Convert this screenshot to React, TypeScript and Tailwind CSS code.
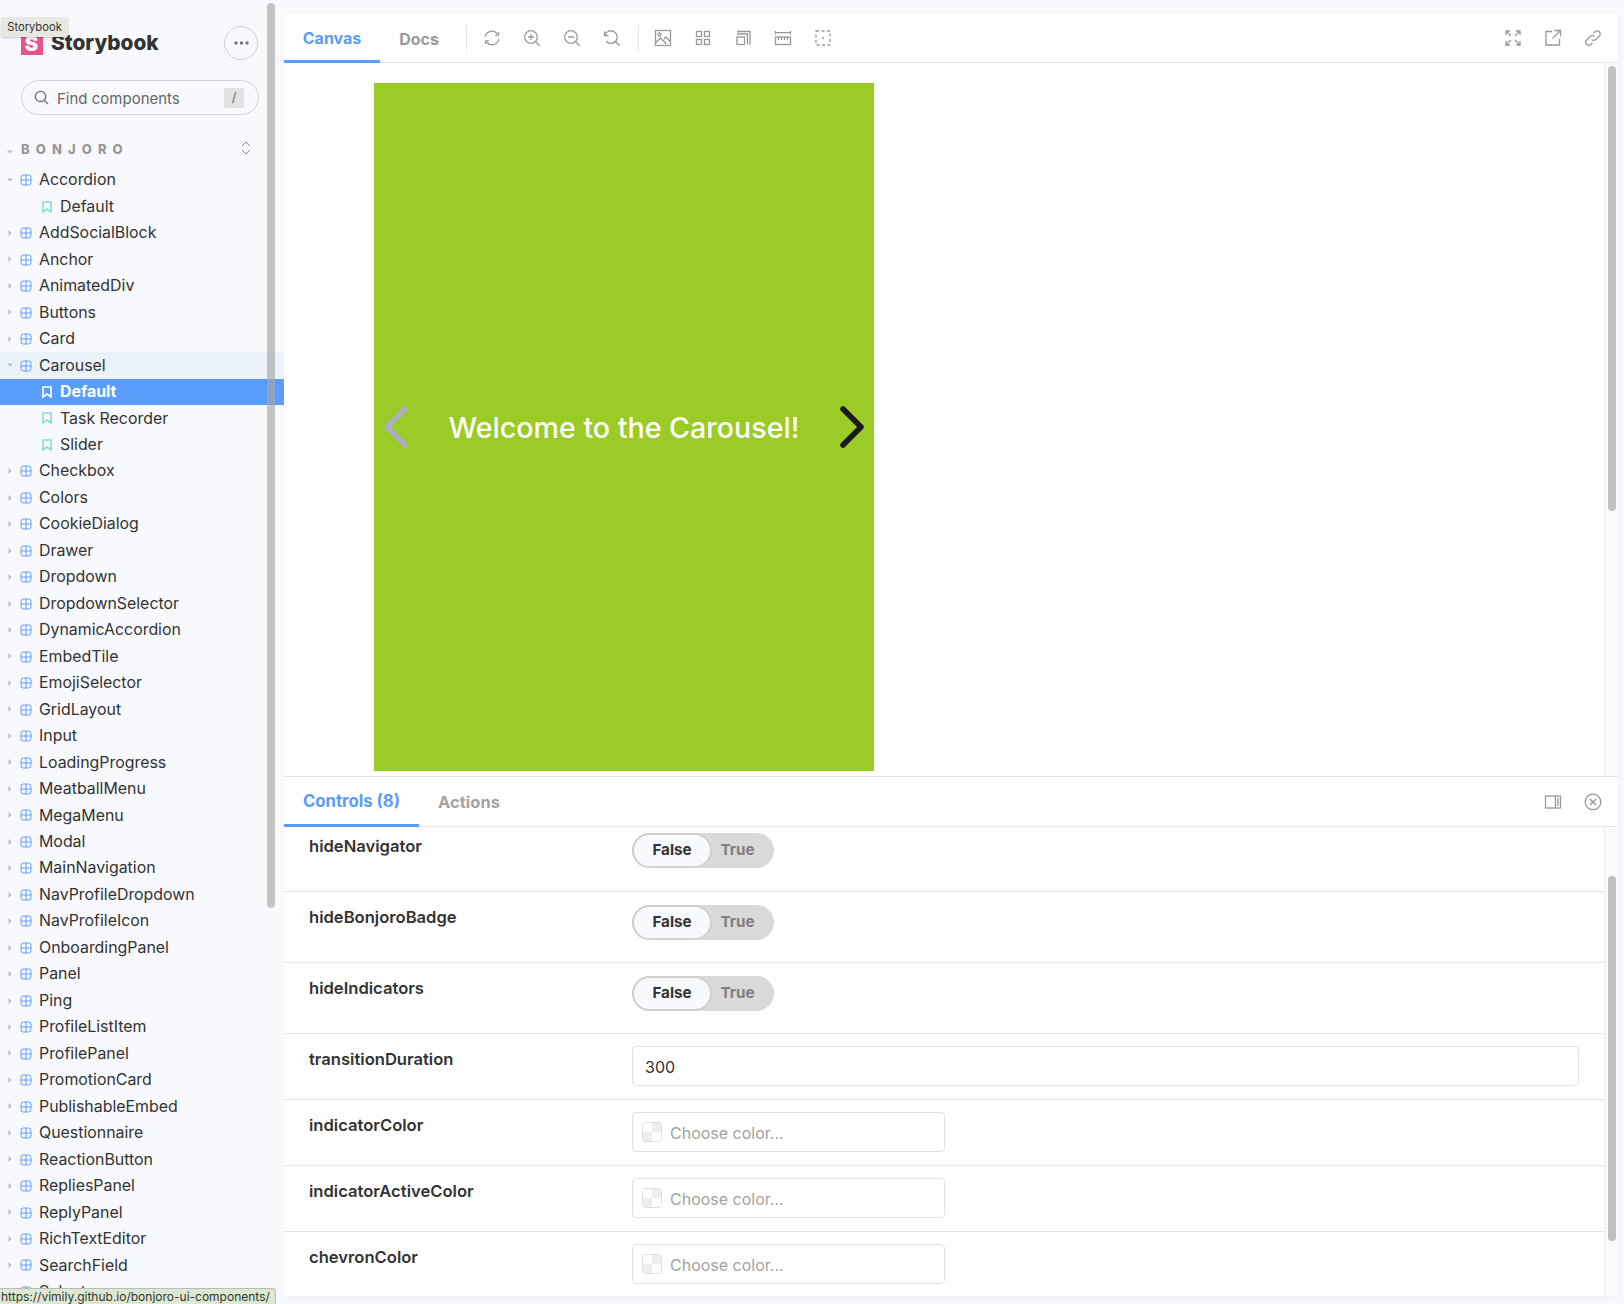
import type { ReactNode } from 'react'

const tree: { name: string; open?: boolean; stories?: string[] }[] = [
  { name: 'Accordion', open: true, stories: ['Default'] },
  { name: 'AddSocialBlock' },
  { name: 'Anchor' },
  { name: 'AnimatedDiv' },
  { name: 'Buttons' },
  { name: 'Card' },
  { name: 'Carousel', open: true, stories: ['Default', 'Task Recorder', 'Slider'] },
  { name: 'Checkbox' },
  { name: 'Colors' },
  { name: 'CookieDialog' },
  { name: 'Drawer' },
  { name: 'Dropdown' },
  { name: 'DropdownSelector' },
  { name: 'DynamicAccordion' },
  { name: 'EmbedTile' },
  { name: 'EmojiSelector' },
  { name: 'GridLayout' },
  { name: 'Input' },
  { name: 'LoadingProgress' },
  { name: 'MeatballMenu' },
  { name: 'MegaMenu' },
  { name: 'Modal' },
  { name: 'MainNavigation' },
  { name: 'NavProfileDropdown' },
  { name: 'NavProfileIcon' },
  { name: 'OnboardingPanel' },
  { name: 'Panel' },
  { name: 'Ping' },
  { name: 'ProfileListItem' },
  { name: 'ProfilePanel' },
  { name: 'PromotionCard' },
  { name: 'PublishableEmbed' },
  { name: 'Questionnaire' },
  { name: 'ReactionButton' },
  { name: 'RepliesPanel' },
  { name: 'ReplyPanel' },
  { name: 'RichTextEditor' },
  { name: 'SearchField' },
  { name: 'Selector' },
]

function Icon({ children, size = 18 }: { children: ReactNode; size?: number }) {
  return (
    <svg width={size} height={size} viewBox="0 0 18 18" fill="none" stroke="#999" strokeWidth="1.3" className="shrink-0">
      {children}
    </svg>
  )
}

function Caret({ open }: { open?: boolean }) {
  return (
    <svg width="6" height="6" viewBox="0 0 6 6" fill="#bbb" className="absolute left-[7px] top-[10px]">
      {open ? <path d="M0 1.5h6L3 4.5z" /> : <path d="M1.5 0v6L4.5 3z" />}
    </svg>
  )
}

function ComponentIcon() {
  return (
    <svg width="12" height="12" viewBox="0 0 12 12" fill="none" stroke="#5a9cfc" strokeWidth="1" className="shrink-0">
      <rect x="1" y="1" width="10" height="10" rx="2.5" />
      <path d="M6 1v10M1 6h10" />
    </svg>
  )
}

function BookmarkIcon({ active }: { active?: boolean }) {
  return (
    <svg width="10" height="12" viewBox="0 0 10 12" fill="none" stroke={active ? '#fff' : '#85dcd3'} strokeWidth="1.6" className="shrink-0">
      <path d="M1 1h8v10L5 8l-4 3z" />
    </svg>
  )
}

function Tree() {
  return (
    <div className="flex flex-col">
      {tree.map((c) => (
        <div key={c.name} className="flex flex-col">
          <div className={`relative flex h-[26.47px] items-center gap-[7px] pl-[20px] text-[15.9px] text-[#333] ${c.name === 'Carousel' ? 'bg-[#ebf2fc]' : ''}`}>
            <Caret open={c.open} />
            <ComponentIcon />
            <span>{c.name}</span>
          </div>
          {c.stories?.map((s) => {
            const active = c.name === 'Carousel' && s === 'Default'
            return (
              <div
                key={s}
                className={`flex h-[26.47px] items-center gap-[8px] pl-[42px] text-[15.9px] ${active ? 'bg-[#5a9cfc] font-bold text-white' : 'text-[#333]'}`}
              >
                <BookmarkIcon active={active} />
                <span>{s}</span>
              </div>
            )
          })}
        </div>
      ))}
    </div>
  )
}

function Sidebar() {
  return (
    <aside className="relative h-[1304px] w-[284px] shrink-0 overflow-hidden bg-[#f8f9fd]">
      <div className="flex h-[84px] items-end justify-between pb-[29px] pl-[21px] pr-[26px]">
        <div className="flex items-center gap-[8px]">
          <div className="flex h-[23px] w-[22px] items-center justify-center bg-[#e8548a] pr-[1px] text-[20px] leading-none font-black text-white">S</div>
          <span className="text-[20.8px] leading-none font-extrabold text-[#333]">Storybook</span>
        </div>
        <button className="mb-[-5px] flex h-[34px] w-[34px] items-center justify-center rounded-full border border-[#d0d0d0]">
          <svg width="15" height="4" viewBox="0 0 15 4" fill="#777">
            <circle cx="2" cy="2" r="1.7" />
            <circle cx="7.5" cy="2" r="1.7" />
            <circle cx="13" cy="2" r="1.7" />
          </svg>
        </button>
      </div>
      <div className="ml-[21px] mt-[-4px] flex h-[35px] w-[238px] items-center rounded-full border border-[#d3d3d6] pl-[12px] pr-[14px]">
        <svg width="15" height="15" viewBox="0 0 15 15" fill="none" stroke="#666" strokeWidth="1.2">
          <circle cx="6.5" cy="6.5" r="5.2" />
          <path d="M10.5 10.5l3.6 3.6" />
        </svg>
        <span className="ml-[8px] flex-1 pt-[3px] text-[15px] text-[#666]">Find components</span>
        <span className="flex h-[20px] w-[20px] items-center justify-center rounded-[2px] bg-[#e2e2e2] text-[13px] text-[#666]">/</span>
      </div>
      <div className="relative mt-[24px] flex h-[22px] items-center justify-between pl-[21px] pr-[33px]">
        <Caret open />
        <span className="text-[13px] font-extrabold tracking-[0.47em] text-[#999]">BONJORO</span>
        <svg width="10" height="14" viewBox="0 0 10 14" fill="none" stroke="#888" strokeWidth="1" className="mt-[-4px]">
          <path d="M1 5l4-4 4 4M1 9l4 4 4-4" />
        </svg>
      </div>
      <div className="mt-[6px]">
        <Tree />
      </div>
      {/* overlay scrollbar */}
      <div className="absolute left-[267px] top-[3px] h-[905px] w-[8px] rounded-full bg-[#a8a8a8]/65" />
    </aside>
  )
}

function ToolbarIcons() {
  return (
    <div className="flex items-center">
      <div className="ml-[8px] mr-[16px] h-[25px] w-px bg-[#e4e4e4]" />
      <div className="flex items-center gap-[22px]">
        <Icon>
          <path d="M2.2 8a6.8 6.8 0 0 1 12.2-3M15.8 10a6.8 6.8 0 0 1-12.2 3" />
          <path d="M12.2 6.4l3.2-.4.3-3M5.8 11.6l-3.2.4-.3 3" />
        </Icon>
        <Icon>
          <circle cx="8" cy="8" r="6.3" />
          <path d="M12.5 12.5l4.2 4.2M8 5v6M5 8h6" />
        </Icon>
        <Icon>
          <circle cx="8" cy="8" r="6.3" />
          <path d="M12.5 12.5l4.2 4.2M5 8h6" />
        </Icon>
        <Icon>
          <path d="M2 6a6.3 6.3 0 1 1 1.2 6.2M12.5 12.5l4.2 4.2M1.5 2.5V6.5h4" />
        </Icon>
      </div>
      <div className="ml-[17px] mr-[15px] h-[25px] w-px bg-[#e4e4e4]" />
      <div className="flex items-center gap-[22px]">
        <Icon>
          <rect x="1.5" y="1.5" width="15" height="15" />
          <circle cx="5.5" cy="5.5" r="1.5" />
          <path d="M1.5 14l5-5 6 6M10 10l2-2 4.5 5" />
        </Icon>
        <Icon>
          <rect x="2.5" y="2.5" width="5" height="5" />
          <rect x="10.5" y="2.5" width="5" height="5" />
          <rect x="2.5" y="10.5" width="5" height="5" />
          <rect x="10.5" y="10.5" width="5" height="5" />
        </Icon>
        <Icon>
          <rect x="3" y="8" width="7.5" height="7.5" />
          <path d="M3 5h10.5v10.5M3 2.5h13v13" />
        </Icon>
        <Icon>
          <path d="M1.5 2v3.5M16.5 2v3.5M1.5 3.7h15" />
          <rect x="1.5" y="8" width="15" height="7.5" />
          <path d="M4.5 8v3M7.5 8v3M10.5 8v3M13.5 8v3" />
        </Icon>
        <Icon>
          <rect x="2" y="2" width="14" height="14" strokeDasharray="3 2.5" />
          <circle cx="9" cy="9" r="1" fill="#999" stroke="none" />
        </Icon>
      </div>
    </div>
  )
}

function Toolbar() {
  return (
    <div className="flex h-[50px] shrink-0 items-stretch border-b border-[#e6e6e6]">
      <div className="mb-[-1px] flex w-[96px] items-center justify-center border-b-[3px] border-[#5a9cfc] pt-[2px] text-[16px] font-bold text-[#5a9cfc]">Canvas</div>
      <div className="flex w-[78px] items-center justify-center pt-[2px] text-[16px] font-bold text-[#999]">Docs</div>
      <ToolbarIcons />
      <div className="ml-auto flex items-center gap-[22px] pr-[16px]">
        <Icon>
          <path d="M2 6V2h4M16 6V2h-4M2 12v4h4M16 12v4h-4M2.5 2.5L7 7M15.5 2.5L11 7M2.5 15.5L7 11M15.5 15.5L11 11" />
        </Icon>
        <Icon>
          <path d="M8 2.5H2v13.500h13.500V10M10.500 1.500H16.500V7.500M16 2L8.500 9.500" />
        </Icon>
        <Icon>
          <path d="M7.500 10.500a3 3 0 0 0 4.300 0l3.500-3.500a3 3 0 0 0-4.300-4.300L9.500 4.200" />
          <path d="M10.500 7.500a3 3 0 0 0-4.300 0l-3.500 3.500a3 3 0 0 0 4.300 4.300l1.500-1.500" />
        </Icon>
      </div>
    </div>
  )
}

function Chevron({ dir, color }: { dir: 'left' | 'right'; color: string }) {
  return (
    <svg width="24" height="42" viewBox="0 0 24 42" fill="none" stroke={color} strokeWidth="5.500" strokeLinecap="round" strokeLinejoin="round">
      <path d={dir === 'left' ? 'M21 3L3 21l18 18' : 'M3 3l18 18L3 39'} />
    </svg>
  )
}

function Canvas() {
  return (
    <div className="relative h-[713px] shrink-0 overflow-hidden pl-[90px] pt-[20px]">
      <div className="flex h-[688px] w-[500px] items-center justify-between bg-[#9acb26] px-[10px]">
        <Chevron dir="left" color="#adadc0" />
        <span className="pt-[2px] text-[28.6px] font-medium text-white">Welcome to the Carousel!</span>
        <Chevron dir="right" color="#1a1a1e" />
      </div>
      <div className="absolute bottom-0 right-0 top-0 w-[14px] border-l border-[#ececec] bg-[#fafafa]">
        <div className="ml-[3px] mt-[3px] h-[445px] w-[8px] rounded-full bg-[#c0c0c0]" />
      </div>
    </div>
  )
}

function BoolToggle() {
  return (
    <div className="flex h-[35px] w-[142px] items-center rounded-full bg-[#d9d9d9] text-[15.2px] font-bold">
      <div className="flex h-[35px] w-[80px] items-center justify-center rounded-full border-2 border-[#d0d0d0] bg-[#f8f9fd] text-[#333]">False</div>
      <div className="flex-1 pr-[11px] text-center text-[#808080]">True</div>
    </div>
  )
}

function ColorInput() {
  return (
    <div className="flex h-[40px] w-[313px] items-center rounded-[4px] border border-[#e3e3e3] pl-[9px]">
      <div className="grid h-[20px] w-[20px] grid-cols-2 grid-rows-2 overflow-hidden rounded-[4px] border border-[#ddd]">
        <div className="bg-white" />
        <div className="bg-[#eee]" />
        <div className="bg-[#eee]" />
        <div className="bg-white" />
      </div>
      <span className="ml-[8px] pt-[1px] text-[16px] text-[#a3a3a3]">Choose color...</span>
    </div>
  )
}

function Row({ label, height, last, low, children }: { label: string; height: string; last?: boolean; low?: boolean; children: ReactNode }) {
  return (
    <div className={`flex pl-[25px] ${height} ${last ? '' : 'border-b border-[#e6e6e6]'}`}>
      <div className={`w-[323px] shrink-0 text-[16.6px] leading-[22px] font-semibold text-[#333] ${low ? 'pt-[2px]' : 'pt-[1px]'}`}>{label}</div>
      {children}
    </div>
  )
}

function Controls() {
  return (
    <div className="flex min-h-0 flex-1 flex-col">
      <div className="flex h-[51px] shrink-0 items-stretch border-y border-[#e6e6e6]">
        <div className="mb-[-1px] flex w-[135px] items-center justify-center border-b-[3px] border-[#5a9cfc] pt-[3px] text-[16.7px] font-bold text-[#5a9cfc]">Controls (8)</div>
        <div className="ml-[-1px] flex w-[102px] items-center justify-center pt-[1px] text-[16.5px] font-bold text-[#a3a3a3]">Actions</div>
        <div className="ml-auto flex items-center gap-[22px] pr-[16px]">
          <Icon>
            <rect x="1.500" y="3" width="15" height="12" />
            <path d="M11.500 3v12M14 5v8" />
          </Icon>
          <Icon>
            <circle cx="9" cy="9" r="7.800" />
            <path d="M6 6l6 6M12 6l-6 6" strokeWidth="1.500" />
          </Icon>
        </div>
      </div>
      <div className="relative min-h-0 flex-1 overflow-hidden">
        <div className="mt-[-7px] pr-[14px] pt-[13px]">
          <Row label="hideNavigator" height="h-[59px]" low><BoolToggle /></Row>
        </div>
        <div className="pr-[14px]">
          <div className="pt-[13px]"><Row label="hideBonjoroBadge" height="h-[58px]"><BoolToggle /></Row></div>
          <div className="pt-[13px]"><Row label="hideIndicators" height="h-[58px]"><BoolToggle /></Row></div>
          <div className="pt-[12px]">
            <Row label="transitionDuration" height="h-[54px]" low>
              <div className="mr-[25px] flex h-[40px] flex-1 items-center rounded-[4px] border border-[#e3e3e3] pl-[12px] pt-[1px] text-[16px] text-[#333]">300</div>
            </Row>
          </div>
          <div className="pt-[12px]"><Row label="indicatorColor" height="h-[54px]" low><ColorInput /></Row></div>
          <div className="pt-[12px]"><Row label="indicatorActiveColor" height="h-[54px]" low><ColorInput /></Row></div>
          <div className="pt-[12px]"><Row label="chevronColor" height="h-[54px]" last low><ColorInput /></Row></div>
        </div>
        <div className="absolute bottom-0 right-0 top-0 w-[14px] border-l border-[#ececec] bg-[#fafafa]">
          <div className="ml-[3px] mt-[49px] h-[365px] w-[8px] rounded-full bg-[#c0c0c0]" />
        </div>
      </div>
    </div>
  )
}

export default function App() {
  return (
    <div className="relative flex h-[1304px] w-[1624px] overflow-hidden bg-[#f8f9fd] font-['Inter',sans-serif]">
      <Sidebar />
      <main className="mb-[8px] ml-0 mr-[6px] mt-[13px] flex min-w-0 flex-1 flex-col overflow-hidden rounded-[4px] bg-white shadow-[0_1px_5px_rgba(0,0,0,0.05)]">
        <Toolbar />
        <Canvas />
        <Controls />
      </main>
      {/* hover tooltip */}
      <div className="absolute left-[1px] top-[17px] flex h-[20px] w-[67px] items-center justify-center rounded-[2px] bg-[#e8e8e3] text-[11.200px] text-[#333] shadow-[0_1px_2px_rgba(0,0,0,0.2)]">Storybook</div>
      {/* browser status bubble */}
      <div className="absolute bottom-0 left-0 flex h-[16px] w-[276px] items-center rounded-tr-[4px] border-r border-t border-[#bbb] bg-[#dde8d2] pl-[1px] pt-[1px] text-[12px] whitespace-nowrap text-[#333]">https://vimily.github.io/bonjoro-ui-components/</div>
    </div>
  )
}
